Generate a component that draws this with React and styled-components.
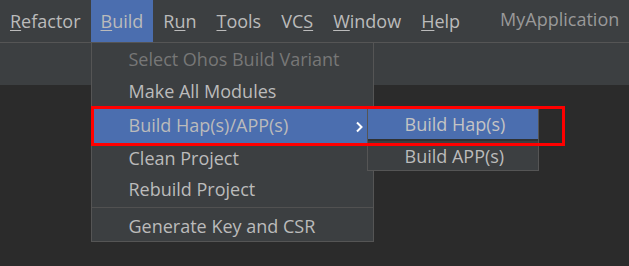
import React from 'react';
import styled, { createGlobalStyle } from 'styled-components';

const Global = createGlobalStyle`
    html, body {
        margin: 0;
        padding: 0;
        background: #2b2b2b;
    }
    #root {
        height: 266px;
    }
`;

const Page = styled.div`
    height: 266px;
    display: flex;
    flex-direction: column;
    font-family: 'Open Sans', 'Noto Sans', sans-serif;
    font-size: 18px;
    color: #bbbbbb;
    overflow: hidden;
`;

const MenuBar = styled.div`
    display: flex;
    align-items: stretch;
    height: 42px;
    background: #3c3f41;
    border-bottom: 1px solid #555555;
`;

const MenuItem = styled.div`
    position: relative;
    padding: 0 10px;
    line-height: 42px;
    white-space: nowrap;
    background: ${(p) => (p.$active ? '#4b6eaf' : 'transparent')};
    u {
        text-decoration-thickness: 1px;
        text-underline-offset: 2px;
    }
`;

const Title = styled.div`
    margin-left: 30px;
    line-height: 38px;
    color: #999999;
    white-space: nowrap;
`;

const Toolbar = styled.div`
    height: 42px;
    background: #3c3f41;
`;

const Editor = styled.div`
    flex: 1;
    background: #2b2b2b;
`;

const Dropdown = styled.div`
    position: absolute;
    top: 100%;
    left: 0;
    width: 283px;
    box-sizing: border-box;
    background: #3c3f41;
    border: 1px solid #555555;
    z-index: 5;
`;

const Row = styled.div`
    position: relative;
    display: flex;
    align-items: center;
    height: ${(p) => p.$h || 32}px;
    padding: 0 10px 0 37px;
    color: ${(p) => (p.$disabled ? '#777777' : '#bbbbbb')};
    background: ${(p) => (p.$selected ? '#4b6eaf' : 'transparent')};
    white-space: nowrap;
    line-height: 1;
`;

const Chevron = styled.svg`
    margin-left: auto;
    margin-right: -1px;
    margin-top: 3px;
    width: 9px;
    height: 12px;
`;

const Separator = styled.div`
    height: 1px;
    margin: 2px 0;
    background: #515151;
`;

const Submenu = styled.div`
    position: absolute;
    top: 1px;
    left: calc(100% - 6px);
    width: 172px;
    box-sizing: border-box;
    background: #3c3f41;
    border: 1px solid #555555;
`;

const SubRow = styled.div`
    display: flex;
    align-items: center;
    height: ${(p) => p.$h}px;
    padding-left: 37px;
    color: ${(p) => (p.$selected ? '#c4c4c4' : '#bbbbbb')};
    background: ${(p) => (p.$selected ? '#4b6eaf' : 'transparent')};
    border-bottom: ${(p) => (p.$selected ? '2px solid #2f3133' : 'none')};
    white-space: nowrap;
    line-height: 1;
`;

const Highlight = styled.div`
    position: absolute;
    left: -1px;
    top: -1px;
    width: 474px;
    height: 40px;
    box-sizing: border-box;
    border: 3px solid #ff0000;
    pointer-events: none;
    z-index: 10;
`;

const menus = [
    { pre: '', key: 'R', post: 'efactor' },
    { pre: '', key: 'B', post: 'uild', active: true },
    { pre: 'R', key: 'u', post: 'n' },
    { pre: '', key: 'T', post: 'ools' },
    { pre: 'VC', key: 'S', post: '' },
    { pre: '', key: 'W', post: 'indow' },
    { pre: '', key: 'H', post: 'elp' },
];

const BuildMenu = () => (
    <Dropdown>
        <Row $h={32} $disabled>Select Ohos Build Variant</Row>
        <Row $h={32}>Make All Modules</Row>
        <Row $h={36} $selected>
            Build Hap(s)/APP(s)
            <Chevron viewBox='0 0 9 12'>
                <path d='M2 1.5 L6.5 6 L2 10.5' fill='none' stroke='#ffffff' strokeWidth='2' />
            </Chevron>
            <Submenu>
                <SubRow $h={30} $selected>Build Hap(s)</SubRow>
                <SubRow $h={29}>Build APP(s)</SubRow>
            </Submenu>
            <Highlight />
        </Row>
        <Row $h={30}>Clean Project</Row>
        <Row $h={32}>Rebuild Project</Row>
        <Separator />
        <Row $h={31}>Generate Key and CSR</Row>
    </Dropdown>
);

const App = () => {
    return (
        <Page>
            <Global />
            <MenuBar>
                {menus.map((m) => (
                    <MenuItem key={m.key + m.post} $active={m.active}>
                        {m.pre}
                        <u>{m.key}</u>
                        {m.post}
                        {m.active && <BuildMenu />}
                    </MenuItem>
                ))}
                <Title>MyApplication</Title>
            </MenuBar>
            <Toolbar />
            <Editor />
        </Page>
    );
};

export default App;
